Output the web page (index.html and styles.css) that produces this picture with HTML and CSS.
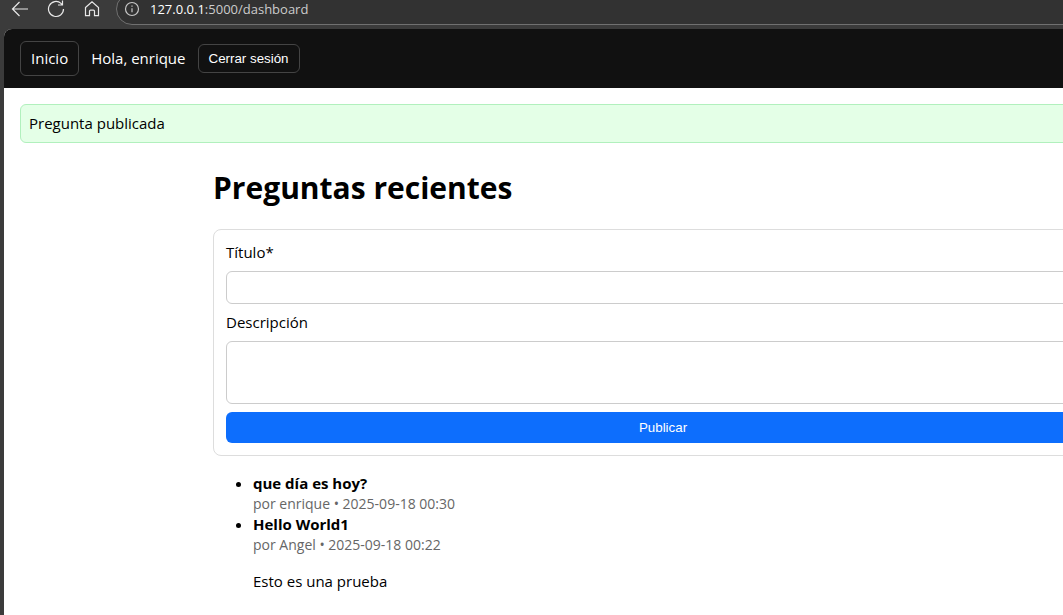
FILE: index.html
```html
<!DOCTYPE html>
<html lang="es">
<head>
<meta charset="utf-8">
<title>Preguntas recientes</title>
<link rel="stylesheet" href="styles.css">
</head>
<body>
<div class="browser">
  <div class="toolbar">
    <button class="tool" type="button" aria-label="Atrás">
      <svg width="18" height="18" viewBox="0 0 18 18"><path d="M17 9H1.500M8.500 2L1.500 9l7 7"/></svg>
    </button>
    <button class="tool" type="button" aria-label="Actualizar">
      <svg width="18" height="18" viewBox="0 0 18 18"><path d="M16.500 9a7.500 7.500 0 1 1-2.500-5.600L15.500 5M15.500 0.500V5H11"/></svg>
    </button>
    <button class="tool" type="button" aria-label="Página principal">
      <svg width="18" height="18" viewBox="0 0 18 18"><path d="M2.500 7.500L9 1.800l6.500 5.700v8.200h-4v-4.500a1 1 0 0 0-1-1h-3a1 1 0 0 0-1 1v4.500h-4z"/></svg>
    </button>
    <div class="address">
      <svg width="16" height="16" viewBox="0 0 16 16"><circle cx="8" cy="8" r="6.500"/><path d="M8 7.200v4M8 4.600v1.200"/></svg>
      <span class="url"><span class="host">127.0.0.1</span>:5000/dashboard</span>
    </div>
  </div>
  <div class="page">
    <nav class="nav">
      <a class="nav-link" href="#">Inicio</a>
      <span>Hola, enrique</span>
      <button class="logout" type="button">Cerrar sesión</button>
    </nav>
    <div class="flash" role="status">Pregunta publicada</div>
    <main class="content">
      <h1 class="heading">Preguntas recientes</h1>
      <form class="card">
        <label for="titulo">Título*</label>
        <input class="field" id="titulo" type="text">
        <label for="descripcion">Descripción</label>
        <textarea class="field area" id="descripcion"></textarea>
        <button class="publish" type="button">Publicar</button>
      </form>
      <ul class="questions">
        <li><strong>que día es hoy?</strong><div class="meta">por enrique • 2025-09-18 00:30</div></li>
        <li><strong>Hello World1</strong><div class="meta">por Angel • 2025-09-18 00:22</div><p class="body-text">Esto es una prueba</p></li>
      </ul>
    </main>
  </div>
</div>
</body>
</html>
```
FILE: styles.css
```css
* { box-sizing: border-box; }
html { overflow: hidden; background: #3b3b3b; }
body {
  margin: 0;
  font: 15px/21px "Segoe UI", "Open Sans", sans-serif;
  color: #000;
}
.browser {
  min-width: 1322px;
  min-height: 100vh;
  display: flex;
  flex-direction: column;
}
.toolbar {
  display: flex;
  height: 29px;
  padding-left: 11px;
  gap: 18px;
  background: #3b3b3b;
}
.tool {
  width: 18px;
  height: 18px;
  padding: 0;
  border: 0;
  background: none;
}
.tool svg, .address svg {
  display: block;
  fill: none;
  stroke: #e8e8e8;
  stroke-width: 1.2;
}
.address {
  flex: 1;
  display: flex;
  align-items: center;
  gap: 10px;
  height: 32px;
  margin: -7px 0 0 -3px;
  padding-left: 7px;
  background: #323232;
  border: 1px solid #707070;
  border-radius: 16px;
}
.address svg { stroke: #c8c8c8; }
.url { font-size: 13px; color: #ccc; }
.host { color: #fff; }
.page {
  flex: 1;
  margin-left: 4px;
  background: #fff;
  border-top-left-radius: 8px;
}
.nav {
  display: flex;
  align-items: center;
  gap: 12px;
  padding: 12px 16px;
  background: #111;
  color: #fff;
  border-top-left-radius: 8px;
}
.nav-link {
  padding: 6px 10px;
  border: 1px solid #444;
  border-radius: 6px;
  color: #fff;
  text-decoration: none;
}
.logout, .publish {
  font-family: Arial, "Liberation Sans", sans-serif;
  line-height: 15px;
  color: #fff;
  border-radius: 6px;
}
.logout {
  padding: 6px 10px;
  background: #111;
  border: 1px solid #444;
}
.flash {
  margin: 16px 16px 0;
  padding: 8px;
  background: #e4ffe7;
  border: 1px solid #b1f0bd;
  border-radius: 6px;
}
.content {
  max-width: 900px;
  margin: 0 auto;
}
.heading {
  margin: 23px 0 20px;
  font-size: 30px;
  line-height: 43px;
}
.card {
  display: grid;
  gap: 8px;
  padding: 12px;
  border: 1px solid #ddd;
  border-radius: 8px;
}
.field {
  width: 100%;
  height: 33px;
  padding: 8px;
  border: 1px solid #ccc;
  border-radius: 6px;
  background: #fff;
  font: inherit;
}
.area { height: 63px; resize: none; }
.publish {
  padding: 8px;
  background: #0d6efd;
  border: 0;
}
.questions { margin: 17px 0; padding-left: 40px; }
.meta {
  font-size: 14px;
  line-height: 20px;
  color: #666;
}
.body-text { margin: 16px 0; }
```
